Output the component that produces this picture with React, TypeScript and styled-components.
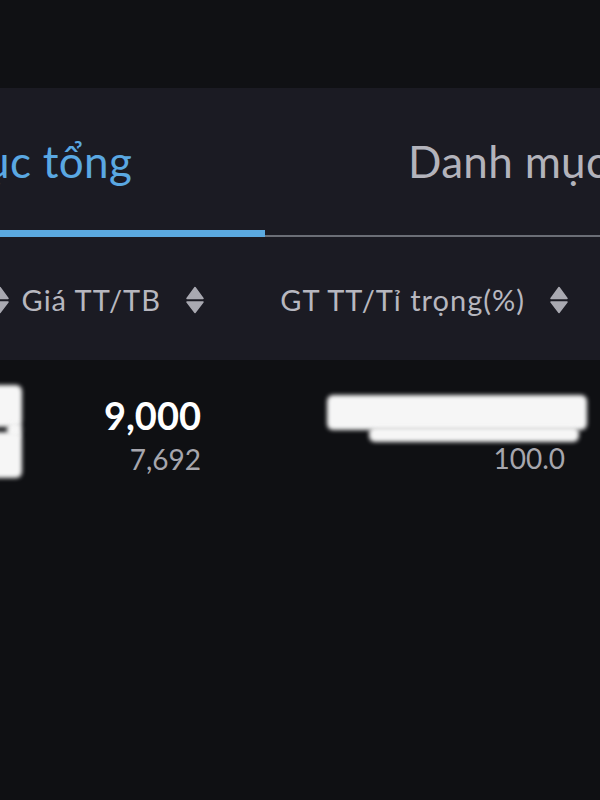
import styled, { createGlobalStyle } from 'styled-components';

const GlobalStyle = createGlobalStyle`
  html, body {
    margin: 0;
    padding: 0;
    background-color: #0f1013;
    overflow: hidden;
  }
  body {
    font-family: Lato, "Noto Sans", "Liberation Sans", sans-serif;
  }
`;

const Screen = styled.div`
  width: 600px;
  height: 800px;
  overflow: hidden;
  background-color: #0f1013;
`;

const TopBar = styled.div`
  height: 88px;
  background-color: #101114;
`;

const Panel = styled.div`
  background-color: #1b1b23;
`;

const Strip = styled.div`
  margin-left: -311px;
  width: 1152px;
`;

const Tabs = styled.div`
  display: flex;
  height: 149px;
  border-bottom: 2px solid #6b6e76;
  box-sizing: border-box;
`;

const Tab = styled.div<{ $active?: boolean }>`
  width: 576px;
  display: flex;
  align-items: center;
  padding: 4px 0 0 143px;
  margin-bottom: -2px;
  box-sizing: border-box;
  font-size: 44px;
  letter-spacing: 0.3px;
  color: ${(p) => (p.$active ? '#5aa8e2' : '#b3b3bb')};
  border-bottom: 7px solid ${(p) => (p.$active ? '#5ba9e0' : 'transparent')};
  white-space: nowrap;
`;

const Grid = styled.div`
  display: grid;
  grid-template-columns: 320px 195px 364px;
`;

const HeaderRow = styled(Grid)`
  height: 123px;
`;

const HeadCell = styled.div`
  display: flex;
  align-items: center;
  justify-content: flex-end;
  gap: 25px;
  padding-top: 2px;
  font-size: 29px;
  letter-spacing: 1px;
  color: #b7b7bf;
  white-space: nowrap;
`;

const Cell = styled.div<{ $pt: number }>`
  display: flex;
  flex-direction: column;
  align-items: flex-end;
  padding-top: ${(p) => p.$pt}px;
  padding-right: 3px;
`;

const MainValue = styled.div`
  font-size: 38px;
  line-height: 46px;
  font-weight: 700;
  color: #ffffff;
`;

const SubValue = styled.div<{ $gap?: number }>`
  margin-top: ${(p) => p.$gap ?? 0}px;
  font-size: 28px;
  line-height: 32px;
  color: #a6a6ad;
`;

// hand-smeared redaction over hidden values
const Redaction = styled.div<{ $w: number; $h: number; $shift: number; $mt?: number }>`
  width: ${(p) => p.$w}px;
  height: ${(p) => p.$h}px;
  margin-right: ${(p) => -p.$shift}px;
  margin-top: ${(p) => p.$mt ?? 0}px;
  background-color: #f6f6f6;
  border-radius: 6px;
  filter: blur(2px);
`;

const SortIcon = () => (
  <svg width="18" height="28" viewBox="0 0 18 28">
    <path d="M9 1.5 L17 12.5 H1 Z" fill="#a9a9b1" strokeLinejoin="round" stroke="#a9a9b1" strokeWidth="1.5" />
    <path d="M1 16 H17 L9 26.5 Z" fill="#a9a9b1" strokeLinejoin="round" stroke="#a9a9b1" strokeWidth="1.5" />
  </svg>
);

const App = () => {
  return (
    <Screen>
      <GlobalStyle />
      <TopBar />
      <Panel>
        <Strip>
          <Tabs>
            <Tab $active>Danh mục tổng</Tab>
            <Tab>Danh mục cơ sở</Tab>
          </Tabs>
          <HeaderRow>
            <HeadCell>
              Mã CK
              <SortIcon />
            </HeadCell>
            <HeadCell>
              Giá TT/TB
              <SortIcon />
            </HeadCell>
            <HeadCell>
              GT TT/Tỉ trọng(%)
              <SortIcon />
            </HeadCell>
          </HeaderRow>
        </Strip>
      </Panel>
      <Strip>
        <Grid>
          <Cell $pt={25}>
            <Redaction $w={200} $h={42} $shift={16} />
            <Redaction $w={15} $h={16} $shift={16} $mt={-5} />
            <Redaction $w={200} $h={46} $shift={16} $mt={-6} />
          </Cell>
          <Cell $pt={32}>
            <MainValue>9,000</MainValue>
            <SubValue $gap={5}>7,692</SubValue>
          </Cell>
          <Cell $pt={35}>
            <Redaction $w={260} $h={35} $shift={22} />
            <Redaction $w={210} $h={15} $shift={14} $mt={-3} />
            <SubValue>100.0</SubValue>
          </Cell>
        </Grid>
      </Strip>
    </Screen>
  );
};

export default App;
